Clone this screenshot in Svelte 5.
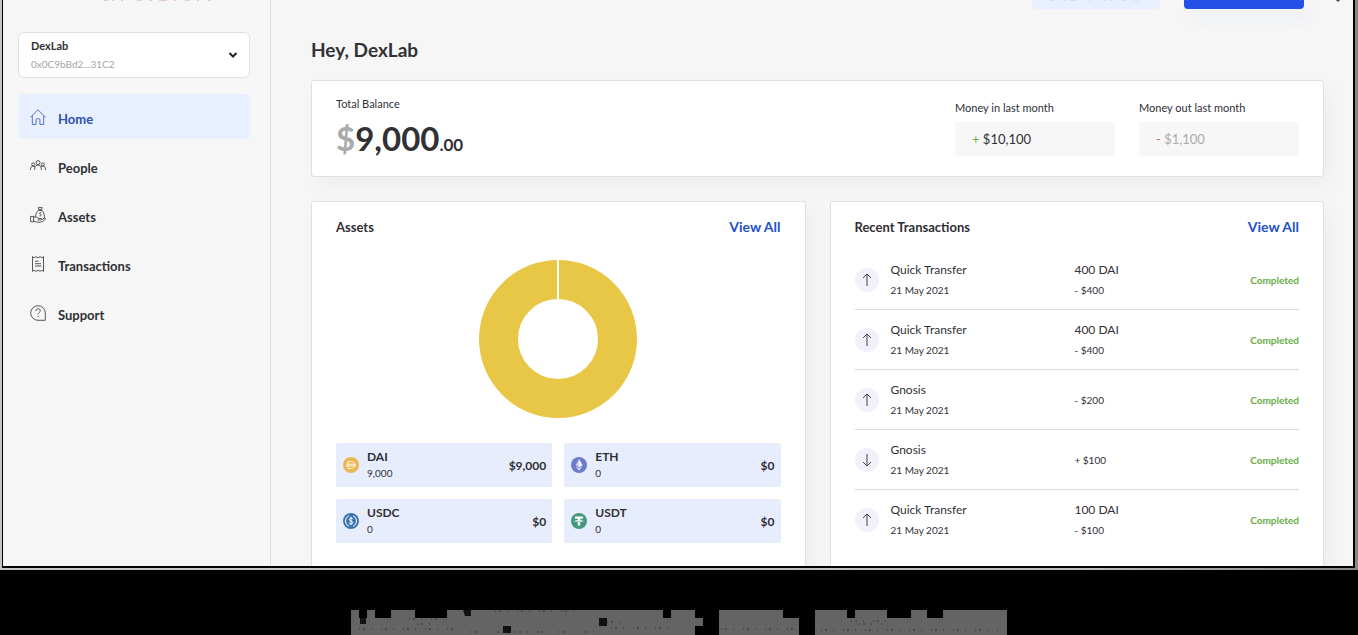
<script lang="ts">
	type Icon = 'home' | 'people' | 'assets' | 'transactions' | 'support';

	const nav: { label: string; icon: Icon; active?: boolean }[] = [
		{ label: 'Home', icon: 'home', active: true },
		{ label: 'People', icon: 'people' },
		{ label: 'Assets', icon: 'assets' },
		{ label: 'Transactions', icon: 'transactions' },
		{ label: 'Support', icon: 'support' },
	];

	const tokens = [
		{ symbol: 'DAI', amount: '9,000', value: '$9,000' },
		{ symbol: 'ETH', amount: '0', value: '$0' },
		{ symbol: 'USDC', amount: '0', value: '$0' },
		{ symbol: 'USDT', amount: '0', value: '$0' },
	];

	const transactions = [
		{ name: 'Quick Transfer', date: '21 May 2021', amount: '400 DAI', value: '- $400', incoming: false },
		{ name: 'Quick Transfer', date: '21 May 2021', amount: '400 DAI', value: '- $400', incoming: false },
		{ name: 'Gnosis', date: '21 May 2021', amount: '', value: '- $200', incoming: false },
		{ name: 'Gnosis', date: '21 May 2021', amount: '', value: '+ $100', incoming: true },
		{ name: 'Quick Transfer', date: '21 May 2021', amount: '100 DAI', value: '- $100', incoming: false },
	];
</script>

{#snippet navIcon(name: Icon)}
	<svg class="nav-icon" viewBox="0 0 16 16" aria-hidden="true">
		{#if name === 'home'}
			<path d="M.6 8.2 8 .8l7.4 7.4M2.3 7v8.4h3.8v-4.6c0-.7.4-1.1 1.1-1.1h1.6c.7 0 1.1.4 1.1 1.1v4.6h3.8V7" />
		{:else if name === 'people'}
			<circle cx="8" cy="4.6" r="2" />
			<circle cx="3.2" cy="6.4" r="1.5" />
			<circle cx="12.8" cy="6.4" r="1.5" />
			<path d="M4.7 12v-1.4C4.700 8.300 6 7.200 8 7.200s3.300 1.100 3.300 3.400V12M.5 12v-1.100c0-1.800 1.100-2.800 2.800-2.800.8 0 1.300.2 1.800.6M15.500 12v-1.100c0-1.800-1.100-2.800-2.800-2.800-.8 0-1.300.2-1.800.6" />
		{:else if name === 'assets'}
			<path d="M8.200.6h4l-.8 2.200H9zM9 2.800c-2.300 1.800-3.300 4-3.500 7M11.400 2.800c2 2 3 4.200 3 7.400v1M8.600 3.600h3.200" />
			<path d="M.6 9.400h3v5.400h-3zM3.600 10h2.800l2.500 1.500h2c1.200 0 1.200 1.400 0 1.400H7.600M11.600 12.500l2.700-1.400c1-.4 1.600.4.900 1.200-1.700 1.800-3.500 3-6.200 3-2.200 0-3.700-.6-5.400-1.200" />
			<path d="M11 5.600c-1.700-.3-1.900 1.300-.8 1.600 1.500.4 1.200 2-.8 1.600" />
		{:else if name === 'transactions'}
			<path d="M2.500.6v14.800l1.600-1.200 1.800 1.200 2.100-1.200 2.100 1.200 1.800-1.200 1.600 1.200V.6l-1.600 1.200L10.100.6 8 1.800 5.900.6 4.100 1.800z" />
			<path d="M5 5.200h3.500M5 7.700h6M5 10h6.300" />
		{:else}
			<path d="M15.300 15.300V8A7.300 7.300 0 1 0 8 15.300zM5.800 6.100c0-3.100 4.500-2.900 4.500-.3 0 1.700-2.200 1.800-2.200 3.700M8.100 11v1" />
		{/if}
	</svg>
{/snippet}

{#snippet tokenIcon(symbol: string)}
	<svg class="token-icon" viewBox="0 0 16 16" aria-hidden="true">
		{#if symbol === 'DAI'}
			<circle cx="8" cy="8" r="8" fill="#eab653" />
			<path d="M5 4.500h3.200c2 0 3.600 1.400 3.600 3.500s-1.600 3.500-3.600 3.500H5zM3.200 7.200h9.800M3.200 8.900h9.800" fill="none" stroke="#fff5dc" />
		{:else if symbol === 'ETH'}
			<circle cx="8" cy="8" r="8" fill="#6b7ccb" />
			<path d="m8 2.300 3.300 5.900L8 10.200 4.700 8.200z" fill="#c8d1f3" />
			<path d="M8 2.300v7.900l3.300-2z" fill="#fff" />
			<path d="m4.700 9.200 3.300 2 3.300-2L8 13.700z" fill="#e2e7fa" />
		{:else if symbol === 'USDC'}
			<circle cx="8" cy="8" r="8" fill="#3c74b0" />
			<path d="M6 2.700a5.700 5.700 0 0 0 0 10.600M10 2.700a5.700 5.700 0 0 1 0 10.600" fill="none" stroke="#fff" />
			<path d="M9.900 6.300C9.600 4.600 6.200 4.700 6.200 6.400c0 2 3.700 1.200 3.700 3.200 0 1.800-3.600 1.900-3.900 0M8 3.900v8.200" fill="none" stroke="#fff" />
		{:else}
			<circle cx="8" cy="8" r="8" fill="#459a7e" />
			<path d="M4 3.600h8v2.100H9.200v1.200c4.400.2 4.400 1.900 0 2.100v3.600H6.800V9c-4.400-.2-4.400-1.900 0-2.100V5.700H4z" fill="#fff" />
			<path d="M3.900 7.900c1 .7 7.200.7 8.200 0" fill="none" stroke="#459a7e" stroke-width=".6" />
		{/if}
	</svg>
{/snippet}

<div class="frame">
	<div class="window">
		<aside>
			<div class="logo" aria-hidden="true">
				<svg viewBox="0 0 108 2">
					<path d="M0 .5h4M8 .5h2M17 .5h2M33 .5h5M45 .5h3M55 .5h8M70 .5h2M81 .5h5M93 .5h2M104 .5h3" />
				</svg>
			</div>

			<button class="account">
				<span class="account-text">
					<strong>DexLab</strong>
					<span class="address">0x0C9bBd2...31C2</span>
				</span>
				<svg class="chevron" viewBox="0 0 10 8" aria-hidden="true"><path d="m1.500 2 3.500 3.500L8.500 2" /></svg>
			</button>

			<nav>
				{#each nav as item}
					<a href="#{item.icon}" class:active={item.active}>
						{@render navIcon(item.icon)}
						<span>{item.label}</span>
					</a>
				{/each}
			</nav>
		</aside>

		<main>
			<div class="topbar">
				<button class="action light" aria-label="Add money">
					<svg viewBox="0 0 94 2" aria-hidden="true">
						<path d="M0 .5h5M14 .5h3M20 .5h7M40 .5h2M54 .5h4M61 .5h3M72 .5h5M84 .5h2M87 1.500h3" />
					</svg>
				</button>
				<button class="action primary" aria-label="Send money"></button>
				<svg class="menu" viewBox="0 0 4 2" aria-hidden="true"><path d="M0 0h4L2 2z" /></svg>
			</div>

			<h1>Hey, DexLab</h1>

			<section class="card balance">
				<div class="total">
					<span class="caption">Total Balance</span>
					<div class="sum"><span class="currency">$</span>9,000<small>.00</small></div>
				</div>
				<div class="flow">
					<span class="caption">Money in last month</span>
					<div class="flow-value"><span class="plus">+</span> $10,100</div>
				</div>
				<div class="flow">
					<span class="caption">Money out last month</span>
					<div class="flow-value out"><span class="minus">-</span> $1,100</div>
				</div>
			</section>

			<div class="columns">
				<section class="card panel">
					<header>
						<h2>Assets</h2>
						<a href="#assets">View All</a>
					</header>
					<svg class="donut" viewBox="0 0 158 158" role="img" aria-label="Asset allocation">
						<circle cx="79" cy="79" r="59.5" />
						<path d="M79 0v40" />
					</svg>
					<div class="tokens">
						{#each tokens as token}
							<div class="token">
								{@render tokenIcon(token.symbol)}
								<div class="token-name">
									<strong>{token.symbol}</strong>
									<span>{token.amount}</span>
								</div>
								<strong>{token.value}</strong>
							</div>
						{/each}
					</div>
				</section>

				<section class="card panel">
					<header>
						<h2>Recent Transactions</h2>
						<a href="#transactions">View All</a>
					</header>
					<ul>
						{#each transactions as tx}
							<li>
								<span class="direction">
									<svg viewBox="0 0 12 14" aria-hidden="true">
										{#if tx.incoming}
											<path d="M6 1v12M2 9l4 4 4-4" />
										{:else}
											<path d="M6 13V1M2 5l4-4 4 4" />
										{/if}
									</svg>
								</span>
								<div class="lines">
									<span>{tx.name}</span>
									<span class="minor">{tx.date}</span>
								</div>
								<div class="lines">
									{#if tx.amount}<span>{tx.amount}</span>{/if}
									<span class="minor">{tx.value}</span>
								</div>
								<span class="status">Completed</span>
							</li>
						{/each}
					</ul>
				</section>
			</div>
		</main>
	</div>
</div>

<div class="footer-strip" aria-hidden="true">
	<svg viewBox="0 0 656 25">
		<path
			fill="#646464"
			d="M0 0h8v8h8V0h8v8h16V0h24v8h32V0h216v8h8V0h24v8h8v8h-8v9H0zM368 0h64v8h16v17h-80zM464 0h32v8h8V0h32v8h24V0h16v8h16V0h64v25H464z"
		/>
		<path fill="#111" d="M248 8h8v8h-8zM152 16h8v7h-8zM112 0h8v6h-6zM9 8h6v6H9z" />
		<path
			stroke="#333"
			stroke-dasharray="1 3 2 6 1 9"
			d="M58 9h30M256 12h22M500 11h44M8 19h100M120 22h130M260 18h66M370 19h76M470 20h180M66 14h22M508 14h24M144 1h80"
		/>
	</svg>
</div>

<style>
	:global(body) {
		margin: 0;
		background: #000;
		color: #303035;
		font-family: Lato, 'Liberation Sans', sans-serif;
		font-size: 12px;
	}

	button {
		font: inherit;
		color: inherit;
		border: 0;
		cursor: pointer;
	}

	a {
		text-decoration: none;
	}

	.frame {
		padding: 0 3px 2px 2px;
		background: linear-gradient(to right, #c4c4c4 80%, #888);
	}

	.window {
		display: flex;
		border: solid #000;
		border-width: 0 2px 2px 1px;
		background: #f6f6f6;
	}

	aside {
		flex: 0 0 268px;
		box-sizing: border-box;
		padding: 0 20px 0 15px;
		border-right: 1px solid #dedede;
	}

	.logo {
		display: flex;
		justify-content: center;
		height: 32px;
		padding-left: 48px;
	}

	.logo svg {
		width: 108px;
		height: 2px;
		stroke: #e3cdcd;
	}

	.account {
		display: flex;
		align-items: center;
		justify-content: space-between;
		width: 100%;
		height: 46px;
		padding: 0 11px 0 12px;
		border: 1px solid #e0e0e0;
		border-radius: 6px;
		background: #fff;
		text-align: left;
	}

	.account-text {
		display: flex;
		flex-direction: column;
		gap: 4px;
		font-size: 11px;
		line-height: 15px;
	}

	.address {
		font-size: 10px;
		color: #a4a4a4;
	}

	.chevron {
		width: 10px;
		height: 8px;
		fill: none;
		stroke: #222;
		stroke-width: 2;
	}

	nav {
		display: flex;
		flex-direction: column;
		gap: 4px;
		padding-top: 16px;
	}

	nav a {
		display: flex;
		align-items: center;
		gap: 12px;
		height: 45px;
		padding: 0 12px;
		border-radius: 5px;
		color: #303035;
		font-size: 13px;
		font-weight: 700;
	}

	nav span {
		padding-top: 4px;
	}

	nav a.active {
		background: #e8effe;
		color: #2c50b4;
	}

	.nav-icon {
		width: 16px;
		height: 16px;
		fill: none;
		stroke: currentColor;
		stroke-width: 0.8;
	}

	main {
		flex: 1;
		min-width: 0;
		padding: 0 29px 0 40px;
	}

	.topbar {
		display: flex;
		align-items: flex-start;
		justify-content: flex-end;
		height: 9px;
	}

	.action {
		height: 9px;
		padding: 0;
		border-radius: 0 0 4px 4px;
	}

	.light {
		display: flex;
		justify-content: center;
		width: 128px;
		margin-right: 24px;
		background: #e8effe;
	}

	.light svg {
		width: 94px;
		height: 2px;
		stroke: #d3ddf6;
	}

	.primary {
		width: 120px;
		background: #2450e8;
		box-shadow: 6px 10px 16px rgb(36 80 232 / 6%);
	}

	/* sits in the right gutter, past the edge of the cards */
	.menu {
		width: 4px;
		height: 2px;
		margin: 0 -16px 0 32px;
		fill: #444;
	}

	h1 {
		margin: 29px 0 18px;
		font-size: 19px;
		line-height: 24px;
	}

	.card {
		border: 1px solid #e0e0e0;
		border-radius: 3px;
		background: #fff;
		box-shadow: 6px 8px 20px rgb(0 0 0 / 4%);
	}

	.balance {
		display: flex;
		gap: 24px;
		padding: 15px 24px 13px;
	}

	.total {
		flex: 1;
	}

	.caption {
		display: block;
		font-size: 11px;
		line-height: 15px;
	}

	.sum {
		padding-top: 9px;
		font-size: 33px;
		font-weight: 700;
		line-height: 36px;
	}

	.sum small {
		font-size: 17px;
	}

	.currency {
		color: #aaa;
	}

	.flow {
		width: 160px;
		padding-top: 4px;
	}

	.flow-value {
		margin-top: 7px;
		padding: 0 17px;
		border-radius: 3px;
		background: #f7f7f7;
		font-size: 13px;
		line-height: 34px;
	}

	.plus {
		color: #6cb04a;
	}

	.minus {
		color: #e8595f;
	}

	.out {
		color: #aaa;
	}

	.columns {
		display: grid;
		grid-template-columns: 1fr 1fr;
		gap: 24px;
		padding-top: 24px;
	}

	.panel {
		padding: 16px 24px 17px;
		border-bottom: 0;
		border-radius: 3px 3px 0 0;
	}

	.panel header {
		display: flex;
		justify-content: space-between;
		line-height: 18px;
	}

	h2 {
		margin: 0;
		font-size: 13px;
		line-height: 18px;
	}

	header a {
		color: #2450cc;
		font-size: 14px;
		font-weight: 700;
	}

	.donut {
		display: block;
		width: 158px;
		margin: 24px auto 25px;
	}

	.donut circle {
		fill: none;
		stroke: #e9c746;
		stroke-width: 39;
	}

	.donut path {
		stroke: #fff;
		stroke-width: 2;
	}

	.tokens {
		display: grid;
		grid-template-columns: 1fr 1fr;
		gap: 12px;
	}

	.token {
		display: flex;
		align-items: center;
		gap: 8px;
		height: 44px;
		padding: 0 6px 0 7px;
		border-radius: 2px;
		background: #e8edfd;
	}

	.token-icon {
		width: 16px;
		height: 16px;
	}

	.token-name {
		display: flex;
		flex: 1;
		flex-direction: column;
		line-height: 17px;
	}

	.token-name span {
		font-size: 10px;
	}

	ul {
		margin: 0;
		padding: 14px 0 0;
		list-style: none;
	}

	li {
		display: grid;
		grid-template-columns: 24px 21fr 20fr auto;
		align-items: center;
		gap: 12px;
		height: 59px;
	}

	li + li {
		border-top: 1px solid #d8d8d8;
	}

	.direction {
		display: grid;
		place-items: center;
		height: 24px;
		border-radius: 50%;
		background: #f1f0fb;
	}

	.direction svg {
		width: 12px;
		height: 14px;
		fill: none;
		stroke: #404048;
	}

	.lines {
		display: flex;
		flex-direction: column;
		gap: 4px;
		line-height: 16px;
	}

	.minor {
		font-size: 10px;
	}

	.status {
		color: #66ad46;
		font-size: 10px;
		font-weight: 700;
	}

	.footer-strip {
		display: flex;
		justify-content: center;
		padding-top: 40px;
	}

	.footer-strip svg {
		width: 656px;
		height: 25px;
	}
</style>
